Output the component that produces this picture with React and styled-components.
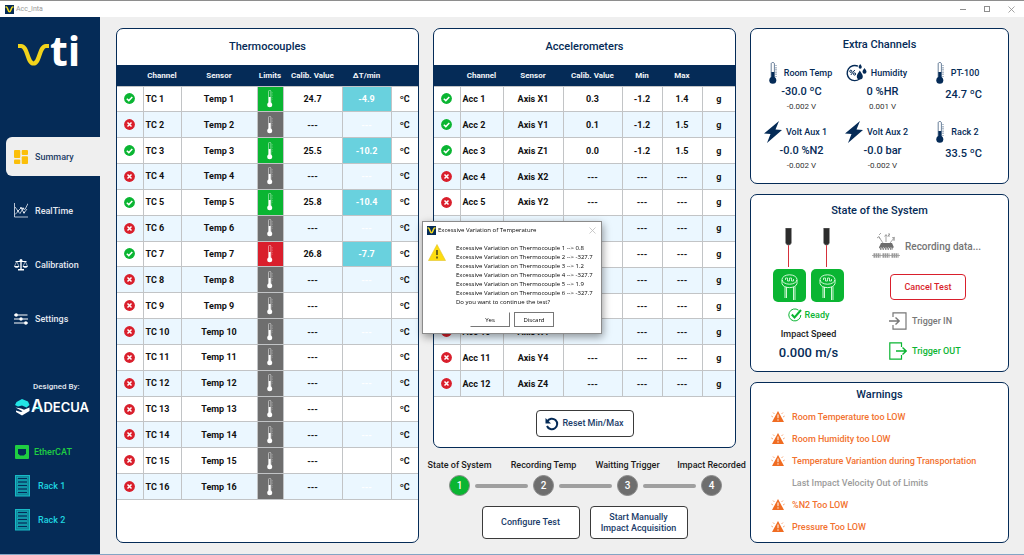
import styled, { createGlobalStyle } from "styled-components";

const NAVY = "#052b57";
const GREEN = "#0ab532";
const RED = "#d91f2c";
const GREY = "#6e6e6e";

const GlobalStyle = createGlobalStyle`
  * {
    box-sizing: border-box;
  }

  body {
    margin: 0;
    background: #efefef;
    font-family: Roboto, "Liberation Sans", sans-serif;
    color: ${NAVY};
  }

  button {
    font-family: inherit;
    cursor: pointer;
  }

  svg {
    display: block;
    flex: none;
  }
`;

const NAV_ITEMS = ["Summary", "RealTime", "Calibration", "Settings"];

const TC_READINGS = {
  1: { value: "24.7", delta: "-4.9", limit: GREEN },
  3: { value: "25.5", delta: "-10.2", limit: GREEN },
  5: { value: "25.8", delta: "-10.4", limit: GREEN },
  7: { value: "26.8", delta: "-7.7", limit: RED },
};

const thermocouples = Array.from({ length: 16 }, (_, i) => ({
  id: i + 1,
  ...TC_READINGS[i + 1],
}));

const ACC_READINGS = {
  1: ["0.3", "-1.2", "1.4"],
  2: ["0.1", "-1.2", "1.5"],
  3: ["0.0", "-1.2", "1.5"],
};

const accelerometers = Array.from({ length: 12 }, (_, i) => ({
  id: i + 1,
  axis: "XYZ"[i % 3] + (Math.floor(i / 3) + 1),
  reading: ACC_READINGS[i + 1],
}));

const extraChannels = [
  { icon: "temp", name: "Room Temp", value: "-30.0 ºC", volts: "-0.002 V" },
  { icon: "humidity", name: "Humidity", value: "0 %HR", volts: "0.001 V" },
  { icon: "temp", name: "PT-100", value: "24.7 ºC" },
  { icon: "bolt", name: "Volt Aux 1", value: "-0.0 %N2", volts: "-0.002 V" },
  { icon: "bolt", name: "Volt Aux 2", value: "-0.0 bar", volts: "-0.002 V" },
  { icon: "temp", name: "Rack 2", value: "33.5 ºC" },
];

const warnings = [
  { text: "Room Temperature too LOW", active: true },
  { text: "Room Humidity too LOW", active: true },
  { text: "Temperature Variantion during Transportation", active: true },
  { text: "Last Impact Velocity Out of Limits", active: false },
  { text: "%N2 Too LOW", active: true },
  { text: "Pressure Too LOW", active: true },
];

const steps = [
  "State of System",
  "Recording Temp",
  "Waitting Trigger",
  "Impact Recorded",
];

const variations = ["0.8", "-327.7", "1.2", "-327.7", "1.9", "-327.7"];

/* ---------- icons ---------- */

const AppIcon = () => (
  <svg width="9" height="9" viewBox="0 0 9 9">
    <rect width="9" height="9" fill={NAVY} />
    <path
      d="M.5 2h1c1.200 0 1.500 4.800 3 4.800S6.300 2 7.500 2h1"
      fill="none"
      stroke="#f2d81b"
      strokeWidth="1.600"
    />
  </svg>
);

const VtiLogo = () => (
  <svg width="66" height="60" viewBox="0 -12 66 60" role="img" aria-label="vti">
    <path
      d="M1 13h3c7 0 6 17.500 12.500 17.500S22 13 29 13h3"
      fill="none"
      stroke="#f2d31b"
      strokeWidth="4.200"
    />
    <text
      x="33"
      y="33"
      fill="#fff"
      fontFamily="Open Sans, sans-serif"
      fontWeight="700"
      fontSize="41"
    >
      ti
    </text>
  </svg>
);

const AdecuaLogo = () => (
  <svg width="82" height="26" viewBox="0 -5 82 26" role="img" aria-label="Adecua">
    <path d="M0 6l1.500-3L7 0l6 2.500L14.500 6l-3 2.500L7 6.500 3 7.500z" fill="#22e4e6" />
    <path d="M.5 8.500L6 9.500l3 1.300 5.500-2.300V12L7 16.500 1 13v-1.500l5 1.500 1.500-.7z" fill="#fff" />
    <text
      x="16"
      y="13"
      fill="#fff"
      fontFamily="Inter, sans-serif"
      fontWeight="600"
      fontSize="17"
    >
      A<tspan fontSize="13">DECUA</tspan>
    </text>
    <path d="M18 12l6-5 1.500 3-3-.5z" fill="#22e4e6" />
  </svg>
);

const DashboardIcon = () => (
  <svg width="14" height="14" viewBox="0 0 14 14" fill="#fbbf0a">
    <rect width="6.300" height="8" rx="1" />
    <rect x="7.700" width="6.300" height="5" rx="1" />
    <rect y="9.500" width="6.300" height="4.500" rx="1" />
    <rect x="7.700" y="6.300" width="6.300" height="7.700" rx="1" />
  </svg>
);

const ChartIcon = () => (
  <svg width="14" height="15" viewBox="0 0 14 15" fill="none" stroke="#e6ebf2">
    <path d="M.5 0v14H14" strokeWidth=".8" />
    <path d="M1 11.500l3-3 2 2 3-5 2 1 3-6M1 4l3 4 3-3 3 5 3-4" strokeWidth=".8" />
    <g fill="#e6ebf2" stroke="none">
      <circle cx="4" cy="8" r="1" />
      <circle cx="7" cy="5" r="1" />
      <circle cx="10" cy="9.500" r="1" />
      <circle cx="9" cy="5.500" r="1" />
    </g>
  </svg>
);

const ScaleIcon = () => (
  <svg width="14" height="12" viewBox="0 0 14 12" fill="#fff">
    <circle cx="7" cy="1.500" r="1.500" />
    <path d="M6.300 2h1.400v8h2.300v1.500H4V10h2.300zM1.500 2h11v.9h-11z" />
    <path d="M0 7h5.400c-.4 2.400-5 2.400-5.400 0zM8.600 7H14c-.4 2.400-5 2.400-5.400 0z" />
    <path d="M.6 7l2.100-4.500L4.800 7M9.200 7l2.100-4.500L13.400 7" fill="none" stroke="#fff" strokeWidth=".6" />
  </svg>
);

const SlidersIcon = () => (
  <svg width="14" height="12" viewBox="0 0 14 12">
    <path d="M0 2h13.500M0 6h14M0 10h14" stroke="#fff" strokeWidth="1.200" />
    <g fill="#fff">
      <circle cx="2.200" cy="2" r="1.700" />
      <circle cx="7" cy="6" r="1.700" />
      <circle cx="11.800" cy="10" r="1.700" />
    </g>
  </svg>
);

const NAV_ICONS = {
  Summary: DashboardIcon,
  RealTime: ChartIcon,
  Calibration: ScaleIcon,
  Settings: SlidersIcon,
};

const EthernetIcon = () => (
  <svg width="14" height="14" viewBox="0 0 14 14">
    <rect width="14" height="14" rx="1" fill="#1fce42" />
    <path d="M3 4h8v4.500L9 10.500H5L3 8.500z" fill={NAVY} />
  </svg>
);

const RackIcon = () => (
  <svg width="15" height="22" viewBox="0 0 15 22" fill="none" stroke="#18b9c6">
    <rect x=".5" y=".5" width="14" height="20.500" fill="#0f8a9c" />
    {[2.5, 6, 9.5, 13, 16.5].map((y) => (
      <rect key={y} x="2.500" y={y} width="10" height="2" strokeWidth=".6" fill={NAVY} />
    ))}
  </svg>
);

const StatusIcon = ({ ok }) => (
  <svg
    width="11"
    height="11"
    viewBox="0 0 11 11"
    role="img"
    aria-label={ok ? "ok" : "error"}
  >
    <circle cx="5.500" cy="5.500" r="5.400" fill={ok ? GREEN : RED} />
    <path
      d={ok ? "M2.800 5.700l2 1.900 3.500-3.700" : "M3.500 3.500l4 4M7.500 3.500l-4 4"}
      fill="none"
      stroke="#fff"
      strokeWidth="1.500"
    />
  </svg>
);

const LimitIcon = () => (
  <svg width="6" height="18" viewBox="0 0 6 18">
    <path d="M1.500 13V1.500a1.200 1.200 0 0 1 2.400 0V13" fill="none" stroke="#fff" strokeWidth=".6" opacity=".8" />
    <path d="M2.700 7v7" stroke="#fff" strokeWidth="2" />
    <circle cx="2.700" cy="14.800" r="2.500" fill="#fff" />
    <path d="M5.300 2v8" stroke="#fff" strokeWidth=".7" strokeDasharray=".7 1" opacity=".5" />
  </svg>
);

const ThermometerIcon = () => (
  <svg width="9" height="22" viewBox="0 0 9 22">
    <path d="M2.200 17V1.800C2.200.9 3 .5 3.800.5s1.600.4 1.600 1.300V17" fill="#fff" stroke={NAVY} strokeWidth=".6" />
    <path d="M3.800 10v8" stroke={NAVY} strokeWidth="3" />
    <circle cx="3.800" cy="18.200" r="3.500" fill={NAVY} />
    <path d="M7 3v12" stroke={NAVY} strokeWidth="1.200" strokeDasharray=".6 1.300" />
  </svg>
);

const HumidityIcon = () => (
  <svg width="21" height="18" viewBox="0 0 21 18">
    <path
      d="M12 2.200A7.600 7.600 0 1 0 13.500 15"
      fill="none"
      stroke={NAVY}
      strokeWidth="1.400"
    />
    <path d="M4.800 11l4-5" stroke={NAVY} strokeWidth="1" />
    <circle cx="4.800" cy="7.300" r="1.100" fill="none" stroke={NAVY} />
    <circle cx="8.600" cy="10" r="1.100" fill="none" stroke={NAVY} />
    <g fill={NAVY}>
      <path d="M13.800 6.500c1.500 2.500 3 4 3 6a3 3 0 0 1-6 0c0-2 1.500-3.500 3-6z" />
      <path d="M18.500 4c1.200 1.700 2 2.600 2 3.700a2 2 0 0 1-4 0c0-1.100.8-2 2-3.700z" />
      <path d="M14.200 0c1 1.500 1.600 2.200 1.600 3.100a1.600 1.600 0 0 1-3.200 0c0-.9.600-1.600 1.600-3.100z" />
    </g>
  </svg>
);

const BoltIcon = () => (
  <svg width="18" height="22" viewBox="0 0 18 22" fill={NAVY}>
    <path d="M15 0L0 12.500l6.500.5L3 22l15-13-6.500-.5z" />
  </svg>
);

const CHANNEL_ICONS = {
  temp: ThermometerIcon,
  humidity: HumidityIcon,
  bolt: BoltIcon,
};

const ResetIcon = () => (
  <svg width="14" height="14" viewBox="0 0 14 14">
    <path d="M2.300 4.300A5.300 5.300 0 1 1 2 9" fill="none" stroke={NAVY} strokeWidth="2" />
    <path d="M.5 1v5.500H6z" fill={NAVY} />
  </svg>
);

const LaserSensor = () => (
  <svg width="33" height="74" viewBox="0 0 33 74">
    <path d="M15.500 16v23" stroke="#d5313b" />
    <path d="M12.500 0h6v15L17 17h-3l-1.500-2z" fill="#2c2c2c" stroke="#9a9a9a" strokeWidth=".5" />
    <rect y="41" width="33" height="33" rx="5" fill={GREEN} />
    <g fill="none" stroke="#e8ffe8" strokeWidth=".9">
      <ellipse cx="16.500" cy="51.500" rx="7.500" ry="4.700" />
      <path d="M9 52v3.500c1 5.500 14 5.500 15 0V52M12 59v11M13.500 59v11M20.500 59v13M22 58.500V72" />
      <path d="M12.500 52v-2h2v3h2v-3h2v3h2v-2" strokeWidth=".8" />
    </g>
  </svg>
);

const ReadyIcon = () => (
  <svg width="14" height="14" viewBox="0 0 14 14" fill="none" stroke={GREEN}>
    <path d="M10.500 2.200A6 6 0 1 0 12.800 7" />
    <path d="M3.800 6.500L6.500 9.500 13 2" strokeWidth="2" />
  </svg>
);

const RecordingIcon = () => (
  <svg width="28" height="26" viewBox="0 0 28 26">
    <g fill="none" stroke="#8d8d8d" strokeWidth=".8">
      <path d="M11 10L7 4M14 9V2M18 10l4-5M5 5l2-1.500 1 2.300M12.600 3.500L14 1.500l1.400 2M20 4.800l2.500-.5-.5 2.500" />
      <path d="M16 1h2l-2 2h2M21 7h2M7 2l2-2" />
    </g>
    <path d="M9 10h11l2 4.500H7z" fill="#6e6e6e" />
    <path d="M7 14.500h15M8 16h13" stroke="#777" strokeWidth="1.600" strokeDasharray="1.500 1" />
    <path d="M0 22.500h28" stroke="#9a9a9a" strokeWidth=".8" />
    <path
      d="M1.500 22.500h7M10.500 22.500h7M19.500 22.500h7"
      stroke="#9a9a9a"
      strokeWidth="4.500"
      strokeDasharray="1.500 .5"
    />
  </svg>
);

const TriggerInIcon = () => (
  <svg width="18" height="18" viewBox="0 0 18 18" fill="none" stroke="#777">
    <path d="M4 5V.8h13v16.400H4V13" strokeWidth="1.200" />
    <path d="M0 9h10M6.500 5.500L10.200 9l-3.700 3.500" strokeWidth="1.400" />
  </svg>
);

const TriggerOutIcon = () => (
  <svg width="18" height="18" viewBox="0 0 18 18" fill="none" stroke={GREEN}>
    <path d="M12.500 5V.8H.8v16.400h11.700V13" strokeWidth="1.200" />
    <path d="M7 9h10M13.500 5.500L17.200 9l-3.700 3.500" strokeWidth="1.400" />
  </svg>
);

const AlarmIcon = () => (
  <svg width="14" height="12" viewBox="0 0 14 12">
    <path d="M7 0l6 11H1z" fill="#f06c22" />
    <path d="M7 3.500v3.700M7 8.300v1.300" stroke="#fff" strokeWidth="1" />
    <path d="M3.500 3L2 1.500M2 6L.3 5M10.500 3L12 1.500M12 6l1.700-1" stroke="#f6a678" />
  </svg>
);

const CautionIcon = () => (
  <svg width="18" height="17" viewBox="0 0 18 17">
    <path d="M9 .5L17.500 16.500H.5z" fill="#fddc10" stroke="#e0c22a" strokeWidth=".6" strokeLinejoin="round" />
    <path d="M9 6v5M9 12.500v2" stroke="#4f4a1a" strokeWidth="1.600" />
  </svg>
);

/* ---------- window frame ---------- */

const Window = styled.div`
  display: flex;
  flex-direction: column;
  min-height: 100vh;
  border-top: 1px solid #8e8e8e;
  border-bottom: 1px solid #83a5c4;
`;

const TitleBar = styled.header`
  display: flex;
  align-items: center;
  gap: 2px;
  height: 16px;
  padding: 0 7px 0 5px;
  background: #fff;
  color: #9a9a9a;
  font-size: 7px;
`;

const WindowButtons = styled.div`
  display: flex;
  gap: 12px;
  margin-left: auto;
`;

const WindowButton = styled.button`
  display: grid;
  place-items: center;
  width: 12px;
  height: 12px;
  padding: 0;
  border: 0;
  background: none;
`;

const Body = styled.div`
  display: flex;
  flex: 1;
`;

/* ---------- sidebar ---------- */

const Sidebar = styled.aside`
  display: flex;
  flex-direction: column;
  width: 100px;
  flex: none;
  background: ${NAVY};
  color: #e4e9f0;
  font-size: 9px;
  font-weight: 500;
`;

const Brand = styled.div`
  height: 120px;
  padding: 4px 17px;
`;

const Nav = styled.nav`
  display: flex;
  flex-direction: column;
  gap: 15px;
  padding-left: 6px;
`;

const NavLink = styled.a`
  display: flex;
  align-items: center;
  gap: 7px;
  height: 39px;
  padding-left: 8px;
  border-radius: 6px 0 0 6px;
  background: ${({ $active }) => ($active ? "#efefef" : "transparent")};
  color: ${({ $active }) => ($active ? "#1d3d66" : "#e4e9f0")};
  text-decoration: none;
`;

const Designer = styled.div`
  display: flex;
  flex-direction: column;
  gap: 1px;
  margin-top: 43px;
  padding-left: 15px;

  span {
    padding-left: 18px;
    font-size: 8px;
    line-height: 12px;
  }
`;

const Devices = styled.ul`
  display: flex;
  flex-direction: column;
  margin: 15px 0 0;
  padding: 0 0 0 15px;
  list-style: none;
`;

const Device = styled.li`
  display: flex;
  align-items: center;
  gap: ${({ $wide }) => ($wide ? "8px" : "5px")};
  height: 34px;
  color: ${({ $color }) => $color};
`;

/* ---------- panels ---------- */

const Main = styled.main`
  display: grid;
  grid-template-columns: 303fr 303fr 259fr;
  gap: 14px;
  flex: 1;
  padding: 11px 15px 11px 16px;
`;

const Column = styled.div`
  display: flex;
  flex-direction: column;
  gap: ${({ $gap }) => $gap || "0"};
  min-width: 0;
`;

const Panel = styled.section`
  border: 1px solid ${NAVY};
  border-radius: 7px;
  background: #fff;
  overflow: hidden;
`;

const PanelTitle = styled.h2`
  margin: 0;
  font-size: 11px;
  font-weight: 500;
  line-height: ${({ $height }) => $height || "36px"};
  text-align: center;
`;

const DataTable = styled.table`
  width: 100%;
  height: ${({ $height }) => $height};
  border-collapse: collapse;
  table-layout: fixed;
  color: #111;
  font-size: 9px;
  font-weight: 700;

  th {
    height: 21px;
    padding: 0;
    background: ${NAVY};
    color: #f2f5f9;
    font-size: 8px;
    white-space: nowrap;
  }

  td {
    height: 25px;
    padding: 0;
    border: 1px solid #c2c4c6;
    text-align: center;
  }

  td:first-child {
    border-left: 0;
  }

  td:last-child {
    border-right: 0;
  }

  td:nth-child(2) {
    padding-left: 2px;
    text-align: left;
  }

  td > svg {
    margin: auto;
  }

  tbody tr:nth-child(even) {
    background: #ebf7ff;
  }
`;

const LimitCell = styled.td`
  background: ${({ $color }) => $color};
`;

const DeltaCell = styled.td`
  background: ${({ $live }) => ($live ? "#69d1de" : "transparent")};
  color: #fff;
`;

/* ---------- buttons and stepper ---------- */

const ActionButton = styled.button`
  display: flex;
  align-items: center;
  justify-content: center;
  gap: 3px;
  width: ${({ $width }) => $width || "98px"};
  height: ${({ $height }) => $height || "33px"};
  padding: 0;
  border: 1px solid ${({ $danger }) => ($danger ? RED : "#3a3a3a")};
  border-radius: 4px;
  background: #fff;
  color: ${({ $danger }) => ($danger ? RED : "#1a3c69")};
  font-size: 9px;
  font-weight: 500;
  line-height: 11px;
`;

const ResetRow = styled.div`
  display: flex;
  justify-content: center;
  padding: 13px 0 10px;
`;

const Stepper = styled.ol`
  display: flex;
  align-items: flex-end;
  margin: 0;
  padding: 11px 14px 0 16px;
  list-style: none;
`;

const Step = styled.li`
  display: flex;
  flex-direction: column;
  align-items: center;
  gap: 4px;
  width: 21px;
  color: #1c1c1c;
  font-size: 9px;
  font-weight: 500;
  line-height: 12px;
  white-space: nowrap;

  b {
    display: grid;
    place-items: center;
    width: 21px;
    height: 21px;
    border: 1px solid #8a8a8a;
    border-radius: 50%;
    background: ${({ $active }) => ($active ? GREEN : GREY)};
    color: #fff;
    font-size: 10px;
    font-weight: 500;
  }
`;

const StepLine = styled.li`
  flex: 1;
  height: 4px;
  margin: 0 5px 8px;
  border-radius: 2px;
  background: #9f9f9f;
`;

const Actions = styled.div`
  display: flex;
  justify-content: center;
  gap: 10px;
  padding-top: 10px;
`;

/* ---------- right column ---------- */

const Channels = styled.div`
  display: grid;
  grid-template-columns: repeat(3, 1fr);
  padding: 0 4px 4px 10px;
`;

const Channel = styled.div`
  display: flex;
  flex-direction: column;
  align-items: center;
  height: 59px;
`;

const ChannelName = styled.div`
  display: flex;
  align-items: center;
  justify-content: center;
  gap: ${({ $narrow }) => ($narrow ? "6px" : "4px")};
  height: 24px;
  padding-right: ${({ $roomy }) => ($roomy ? "2px" : "12px")};
  font-size: 9px;
  font-weight: 500;
  white-space: nowrap;
`;

const ChannelValue = styled.div`
  font-size: 11px;
  font-weight: 500;
  line-height: ${({ $single }) => ($single ? "20px" : "14px")};
`;

const ChannelVolts = styled.div`
  color: #333;
  font-size: 8px;
  line-height: 16px;
`;

const SystemGrid = styled.div`
  display: grid;
  grid-template-columns: 115fr 142fr;
  padding: 1px 0 6px;
`;

const SystemLeft = styled.div`
  display: flex;
  flex-direction: column;
  align-items: center;
`;

const Sensors = styled.div`
  display: flex;
  gap: 5px;
`;

const Ready = styled.div`
  display: flex;
  align-items: center;
  gap: 3px;
  height: 26px;
  color: ${GREEN};
  font-size: 9px;
  font-weight: 500;
`;

const SpeedLabel = styled.div`
  color: #1c1c1c;
  font-size: 9px;
  font-weight: 500;
  line-height: 12px;
`;

const Speed = styled.div`
  font-size: 13px;
  font-weight: 500;
  line-height: 25px;
`;

const SystemRight = styled.div`
  display: flex;
  flex-direction: column;
  align-items: flex-start;
  gap: 12px;
  padding: 5px 0 0 23px;

  button {
    margin-left: 1px;
  }
`;

const Recording = styled.div`
  display: flex;
  align-items: center;
  gap: 5px;
  margin-left: -17px;
  padding-bottom: 3px;
  color: #757575;
  font-size: 10px;
  font-weight: 500;
  white-space: nowrap;
`;

const Trigger = styled.div`
  display: flex;
  align-items: center;
  gap: 5px;
  color: ${({ $on }) => ($on ? GREEN : "#777")};
  font-size: 9px;
  font-weight: 500;
  white-space: nowrap;
`;

const WarningList = styled.ul`
  display: flex;
  flex-direction: column;
  gap: 2px;
  margin: 0;
  padding: 0 0 5px 20px;
  list-style: none;
`;

const Warning = styled.li`
  display: grid;
  grid-template-columns: 14px 1fr;
  align-items: center;
  gap: 7px;
  height: 20px;
  color: ${({ $active }) => ($active ? "#f2722f" : "#9b9b9b")};
  font-size: 9px;
  font-weight: 500;
  white-space: nowrap;

  span {
    grid-column: 2;
  }
`;

/* ---------- dialog ---------- */

const Overlay = styled.div`
  position: fixed;
  inset: 0;
  display: grid;
  place-items: center;
`;

const Dialog = styled.div`
  width: 180px;
  border: 1px solid #8b8b8b;
  background: #fff;
  box-shadow: 1px 3px 8px rgba(0, 0, 0, 0.4);
  color: #000;
  font-family: "Open Sans", "Noto Sans", sans-serif;
  font-size: 6px;
`;

const DialogTitle = styled.div`
  display: flex;
  align-items: center;
  gap: 2px;
  height: 16px;
  padding: 0 3px 0 4px;

  button {
    margin-left: auto;
  }
`;

const DialogBody = styled.div`
  display: flex;
  gap: 10px;
  padding: 6px 5px 5px;

  p {
    margin: 0;
    line-height: 9px;
    white-space: nowrap;
  }
`;

const DialogActions = styled.div`
  display: flex;
  justify-content: center;
  gap: 4px;
  padding: 0 0 6px;
`;

const DialogButton = styled.button`
  width: 40px;
  height: 15px;
  padding: 0;
  border: 1px solid;
  border-color: ${({ $focused }) =>
    $focused ? "#777" : "#fff #777 #777 #fff"};
  background: #fff;
  color: #000;
  font-size: 6px;
`;

const CloseGlyph = ({ color = "#8e8e8e" }) => (
  <svg width="7" height="7" viewBox="0 0 7 7">
    <path d="M.5.5l6 6M6.500.5l-6 6" stroke={color} strokeWidth=".8" />
  </svg>
);

const ThermocoupleTable = () => (
  <DataTable $height="435px">
    <colgroup>
      {[26, 38, 76, 26, 59, 49, 27].map((width, i) => (
        <col key={i} width={width} />
      ))}
    </colgroup>
    <thead>
      <tr>
        <th></th>
        <th>Channel</th>
        <th>Sensor</th>
        <th>Limits</th>
        <th>Calib. Value</th>
        <th>ΔT/min</th>
        <th></th>
      </tr>
    </thead>
    <tbody>
      {thermocouples.map(({ id, value, delta, limit }) => (
        <tr key={id}>
          <td>
            <StatusIcon ok={Boolean(value)} />
          </td>
          <td>TC {id}</td>
          <td>Temp {id}</td>
          <LimitCell $color={limit || GREY}>
            <LimitIcon />
          </LimitCell>
          <td>{value || "---"}</td>
          <DeltaCell $live={Boolean(delta)}>{delta || "---"}</DeltaCell>
          <td>ºC</td>
        </tr>
      ))}
    </tbody>
  </DataTable>
);

const AccelerometerTable = () => (
  <DataTable $height="332px">
    <colgroup>
      {[26, 43, 60, 59, 40, 40, 33].map((width, i) => (
        <col key={i} width={width} />
      ))}
    </colgroup>
    <thead>
      <tr>
        <th></th>
        <th>Channel</th>
        <th>Sensor</th>
        <th>Calib. Value</th>
        <th>Min</th>
        <th>Max</th>
        <th></th>
      </tr>
    </thead>
    <tbody>
      {accelerometers.map(({ id, axis, reading }) => {
        const [value, min, max] = reading || ["---", "---", "---"];
        return (
          <tr key={id}>
            <td>
              <StatusIcon ok={Boolean(reading)} />
            </td>
            <td>Acc {id}</td>
            <td>Axis {axis}</td>
            <td>{value}</td>
            <td>{min}</td>
            <td>{max}</td>
            <td>g</td>
          </tr>
        );
      })}
    </tbody>
  </DataTable>
);

const VariationDialog = () => (
  <Overlay>
    <Dialog role="dialog" aria-labelledby="variation-title">
      <DialogTitle>
        <AppIcon />
        <span id="variation-title">Excessive Variation of Temperature</span>
        <WindowButton aria-label="Close dialog">
          <CloseGlyph color="#bdbdbd" />
        </WindowButton>
      </DialogTitle>
      <DialogBody>
        <CautionIcon />
        <div>
          {variations.map((value, i) => (
            <p key={i}>
              Excessive Variation on Thermocouple {i + 1} --&gt; {value}
            </p>
          ))}
          <p>Do you want to continue the test?</p>
        </div>
      </DialogBody>
      <DialogActions>
        <DialogButton>Yes</DialogButton>
        <DialogButton $focused>Discard</DialogButton>
      </DialogActions>
    </Dialog>
  </Overlay>
);

const App = () => (
  <>
    <GlobalStyle />
    <Window>
      <TitleBar>
        <AppIcon />
        <span>Acc_Inta</span>
        <WindowButtons>
          <WindowButton aria-label="Minimize">
            <svg width="6" height="1">
              <rect width="6" height="1" fill="#8e8e8e" />
            </svg>
          </WindowButton>
          <WindowButton aria-label="Maximize">
            <svg width="6" height="6">
              <rect x=".5" y=".5" width="5" height="5" fill="none" stroke="#8e8e8e" />
            </svg>
          </WindowButton>
          <WindowButton aria-label="Close">
            <CloseGlyph />
          </WindowButton>
        </WindowButtons>
      </TitleBar>
      <Body>
        <Sidebar>
          <Brand>
            <VtiLogo />
          </Brand>
          <Nav>
            {NAV_ITEMS.map((name) => {
              const Icon = NAV_ICONS[name];
              return (
                <NavLink key={name} href="#" $active={name === "Summary"}>
                  <Icon />
                  {name}
                </NavLink>
              );
            })}
          </Nav>
          <Designer>
            <span>Designed By:</span>
            <AdecuaLogo />
          </Designer>
          <Devices>
            <Device $color="#1fce42">
              <EthernetIcon />
              EtherCAT
            </Device>
            <Device $color="#1fd6e0" $wide>
              <RackIcon />
              Rack 1
            </Device>
            <Device $color="#1fd6e0" $wide>
              <RackIcon />
              Rack 2
            </Device>
          </Devices>
        </Sidebar>
        <Main>
          <Panel>
            <PanelTitle>Thermocouples</PanelTitle>
            <ThermocoupleTable />
          </Panel>
          <Column>
            <Panel>
              <PanelTitle>Accelerometers</PanelTitle>
              <AccelerometerTable />
              <ResetRow>
                <ActionButton $height="27px">
                  <ResetIcon />
                  Reset Min/Max
                </ActionButton>
              </ResetRow>
            </Panel>
            <Stepper>
              {steps.map((label, i) => [
                i > 0 && <StepLine key={`line-${i}`} aria-hidden="true" />,
                <Step key={label} $active={i === 0}>
                  {label}
                  <b>{i + 1}</b>
                </Step>,
              ])}
            </Stepper>
            <Actions>
              <ActionButton>Configure Test</ActionButton>
              <ActionButton>
                Start Manually
                <br />
                Impact Acquisition
              </ActionButton>
            </Actions>
          </Column>
          <Column $gap="10px">
            <Panel>
              <PanelTitle $height="32px">Extra Channels</PanelTitle>
              <Channels>
                {extraChannels.map(({ icon, name, value, volts }) => {
                  const Icon = CHANNEL_ICONS[icon];
                  const narrow = icon === "temp";
                  return (
                    <Channel key={name}>
                      <ChannelName $narrow={narrow} $roomy={narrow && volts}>
                        <Icon />
                        {name}
                      </ChannelName>
                      <ChannelValue $single={!volts}>{value}</ChannelValue>
                      {volts && <ChannelVolts>{volts}</ChannelVolts>}
                    </Channel>
                  );
                })}
              </Channels>
            </Panel>
            <Panel>
              <PanelTitle $height="32px">State of the System</PanelTitle>
              <SystemGrid>
                <SystemLeft>
                  <Sensors>
                    <LaserSensor />
                    <LaserSensor />
                  </Sensors>
                  <Ready>
                    <ReadyIcon />
                    Ready
                  </Ready>
                  <SpeedLabel>Impact Speed</SpeedLabel>
                  <Speed>0.000 m/s</Speed>
                </SystemLeft>
                <SystemRight>
                  <Recording>
                    <RecordingIcon />
                    Recording data...
                  </Recording>
                  <ActionButton $danger $width="76px" $height="26px">
                    Cancel Test
                  </ActionButton>
                  <Trigger>
                    <TriggerInIcon />
                    Trigger IN
                  </Trigger>
                  <Trigger $on>
                    <TriggerOutIcon />
                    Trigger OUT
                  </Trigger>
                </SystemRight>
              </SystemGrid>
            </Panel>
            <Panel>
              <PanelTitle $height="24px">Warnings</PanelTitle>
              <WarningList>
                {warnings.map(({ text, active }) => (
                  <Warning key={text} $active={active}>
                    {active && <AlarmIcon />}
                    <span>{text}</span>
                  </Warning>
                ))}
              </WarningList>
            </Panel>
          </Column>
        </Main>
      </Body>
    </Window>
    <VariationDialog />
  </>
);

export default App;
